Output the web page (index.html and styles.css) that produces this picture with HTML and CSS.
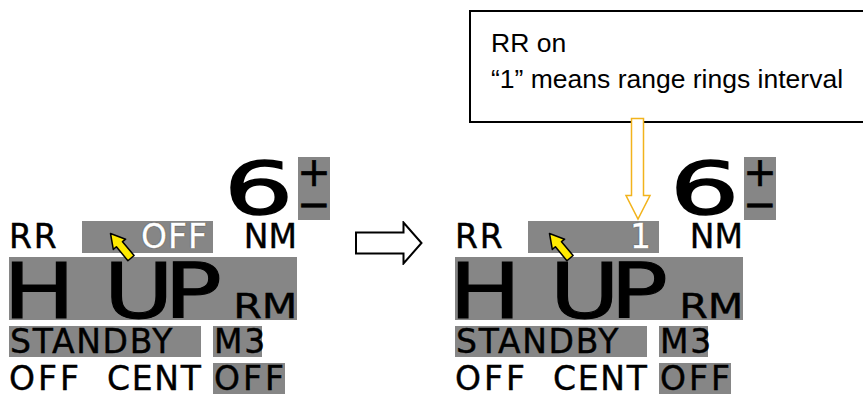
FILE: index.html
```html
<!DOCTYPE html>
<html lang="en">
  <head>
    <meta charset="UTF-8" />
    <title>RR on</title>
    <link rel="stylesheet" href="styles.css">
  </head>
  <body>
    <div class="page">
      <div class="callout">
        <p>RR on</p>
        <p>“1” means range rings interval</p>
      </div>
      <svg class="pointer-down" width="28" height="106" viewBox="0 0 28 106">
        <path d="M7.5 2.5 H19.5 V79.5 H26 L14 103 L2 79.5 H7.5 Z" fill="#fff" stroke="#f2b31c" stroke-width="1.5" />
      </svg>

      <div class="compare">
        <!-- before -->
        <div class="panel">
          <div class="range-row">
            <span class="range-num">6</span>
            <div class="zoom-keys"><span>+</span><span>−</span></div>
          </div>
          <div class="rr-row">
            <span class="lbl rr">RR</span>
            <div class="rr-field">
              <svg class="cursor" width="27" height="30" viewBox="0 0 27 30">
                <path d="M1.5 1.5 L16.6 7.2 L13.5 9.7 L25.1 23.5 L18.9 28.7 L7.4 14.8 L4.3 17.4 Z" fill="#ffea00" stroke="#000" stroke-width="1.5" stroke-linejoin="round" />
              </svg>
              <span class="rr-val">OFF</span>
            </div>
            <span class="lbl nm">NM</span>
          </div>
          <div class="mode-box">
            <span class="mode">H UP</span>
            <span class="motion">RM</span>
          </div>
          <div class="status-row">
            <span class="box standby">STANDBY</span>
            <span class="box m3">M3</span>
          </div>
          <div class="status-row">
            <span class="lbl col-off">OFF</span>
            <span class="lbl col-cent">CENT</span>
            <span class="box off">OFF</span>
          </div>
        </div>

        <svg class="next-arrow" width="68" height="44" viewBox="0 0 68 44">
          <path d="M1 11.5 H48.5 V1.5 L66.5 22 L48.5 42.5 V32.5 H1 Z" fill="#fff" stroke="#000" stroke-width="2" />
        </svg>

        <!-- after -->
        <div class="panel">
          <div class="range-row">
            <span class="range-num">6</span>
            <div class="zoom-keys"><span>+</span><span>−</span></div>
          </div>
          <div class="rr-row">
            <span class="lbl rr">RR</span>
            <div class="rr-field">
              <svg class="cursor cursor-after" width="27" height="30" viewBox="0 0 27 30">
                <path d="M1.5 1.5 L16.6 7.2 L13.5 9.7 L25.1 23.5 L18.9 28.7 L7.4 14.8 L4.3 17.4 Z" fill="#ffea00" stroke="#000" stroke-width="1.5" stroke-linejoin="round" />
              </svg>
              <span class="rr-val rr-one">1</span>
            </div>
            <span class="lbl nm">NM</span>
          </div>
          <div class="mode-box">
            <span class="mode">H UP</span>
            <span class="motion">RM</span>
          </div>
          <div class="status-row">
            <span class="box standby">STANDBY</span>
            <span class="box m3">M3</span>
          </div>
          <div class="status-row">
            <span class="lbl col-off">OFF</span>
            <span class="lbl col-cent">CENT</span>
            <span class="box off">OFF</span>
          </div>
        </div>
      </div>
    </div>
  </body>
</html>
```

FILE: styles.css
```css
html,
body {
  margin: 0;
  padding: 0;
  background: #fff;
  overflow: hidden;
  font-family: "DejaVu Sans", sans-serif;
  color: #000;
}

.page {
  position: relative;
  width: 863px;
  height: 394px;
  overflow: hidden;
}

/* annotation */
.callout {
  position: absolute;
  top: 10px;
  left: 469px;
  width: 420px;
  height: 96px;
  border: 2px solid #000;
  padding: 13px 0 0 20px;
  font-family: "Liberation Sans", Arial, sans-serif;
  font-size: 26.5px;
  line-height: 36px;
}

.callout p {
  margin: 0;
}

.pointer-down {
  position: absolute;
  top: 116px;
  left: 624px;
}

/* radar panels */
.compare {
  display: flex;
  align-items: flex-start;
  padding: 157px 0 0 9px;
}

.panel {
  display: flex;
  flex-direction: column;
  width: 288px;
  flex-shrink: 0;
}

.next-arrow {
  flex-shrink: 0;
  margin: 64px 32px 0 58px;
}

.range-row {
  display: flex;
  justify-content: flex-end;
  align-items: flex-start;
  width: 321px;
  height: 64px;
}

.range-num {
  display: inline-block;
  font-size: 73px;
  line-height: 64px;
  -webkit-text-stroke: 1.5px #000;
  transform: scaleX(1.5);
  transform-origin: right center;
  margin-right: 5px;
}

.zoom-keys {
  width: 32px;
  height: 63px;
  background: #868686;
  display: flex;
  flex-direction: column;
  align-items: center;
  justify-content: space-between;
  font-size: 40px;
  line-height: 31px;
  -webkit-text-stroke: 0.6px #000;
}

.lbl,
.box,
.rr-val,
.motion {
  font-size: 33px;
  letter-spacing: 1.7px;
  -webkit-text-stroke: 0.4px currentColor;
}

.rr-row {
  display: flex;
  align-items: flex-start;
  height: 32px;
  line-height: 32px;
}

.rr {
  width: 73px;
}

.rr-field {
  position: relative;
  width: 131px;
  height: 32px;
  background: #868686;
  display: flex;
  justify-content: flex-end;
  padding-right: 5px;
  box-sizing: border-box;
}

.rr-val {
  color: #fff;
  letter-spacing: 1px;
  text-shadow: 0 0 1px #222, 0 0 1px #222;
}

.rr-one {
  padding-right: 2px;
}

.cursor {
  position: absolute;
  top: 11px;
  left: 27px;
}

.cursor-after {
  left: 20px;
}

.nm {
  margin-left: auto;
  letter-spacing: 0;
}

.mode-box {
  display: flex;
  align-items: baseline;
  height: 63px;
  margin-top: 4px;
  background: #868686;
  line-height: 60px;
  padding-top: 5px;
  box-sizing: border-box;
}

.mode {
  display: inline-block;
  font-size: 77px;
  letter-spacing: -8px;
  word-spacing: 14px;
  -webkit-text-stroke: 1px #000;
  transform: scaleX(1.25);
  transform-origin: left center;
  margin-left: -6px;
}

.motion {
  display: inline-block;
  margin-left: auto;
  letter-spacing: 0;
  transform: scaleX(1.25);
  transform-origin: right center;
}

.status-row {
  display: flex;
  height: 31px;
  line-height: 31px;
  margin-top: 6px;
}

.box {
  background: #868686;
  padding-left: 1px;
  box-sizing: border-box;
}

.standby {
  width: 192px;
}

.m3 {
  width: 49px;
  margin-left: 12px;
}

.col-off {
  width: 98px;
  letter-spacing: 3px;
}

.col-cent {
  width: 106px;
}

.off {
  width: 72px;
  height: 40px;
  letter-spacing: 3px;
}
```
